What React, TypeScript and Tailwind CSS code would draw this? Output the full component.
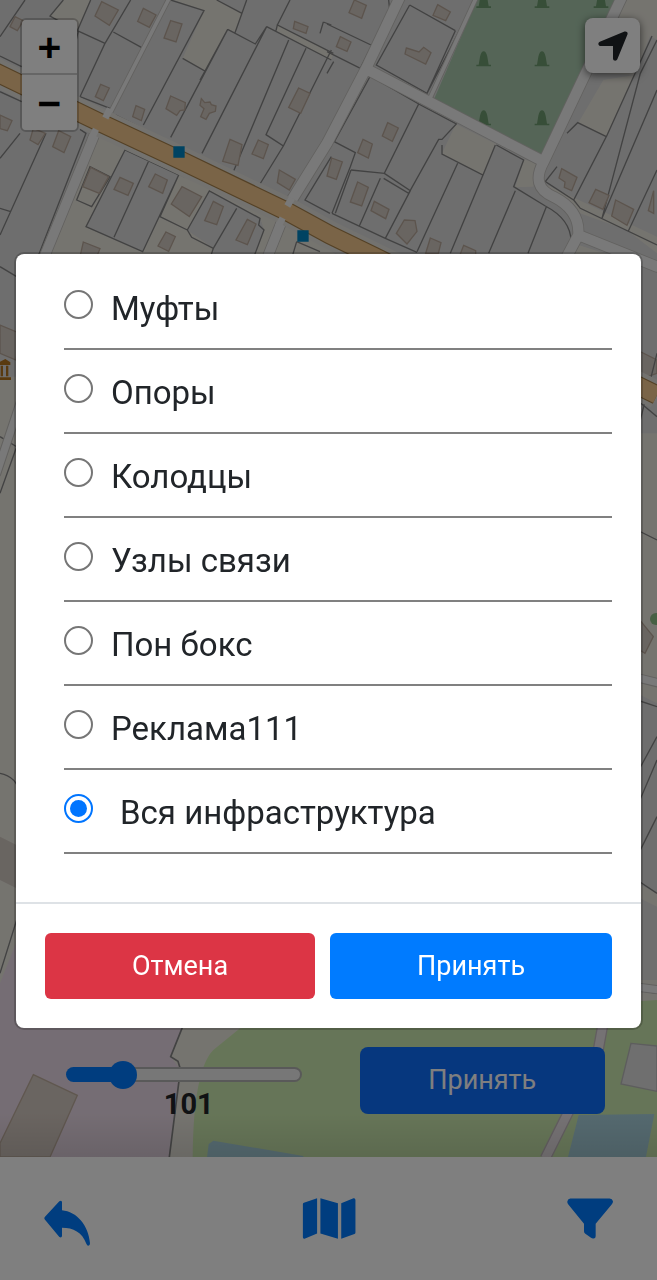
import { useState } from "react";
import type { CSSProperties } from "react";
import { FaLocationArrow } from "react-icons/fa6";

const LAYERS = [
  { id: "couplings", label: "Муфты" },
  { id: "poles", label: "Опоры" },
  { id: "wells", label: "Колодцы" },
  { id: "nodes", label: "Узлы связи" },
  { id: "pon", label: "Пон бокс" },
  { id: "ads", label: "Реклама111" },
  { id: "all", label: "Вся инфраструктура", indent: true },
];

const MAX_RADIUS = 500;

const TREES = [
  [470, 0], [645, 0], [822, 0],
  [470, 175], [645, 175],
  [470, 352], [645, 352],
];

const Tree = ({ x, y }: { x: number; y: number }) => (
  <path
    d={`M${x - 22} ${y + 24}h44v-5h-7l-4-24q-4-16-11-16t-11 16l-4 24h-7z`}
    fill="#6f9c70"
  />
);

/* --- Map tiles: four sheets, three units per pixel --- */
function MapCanvas() {
  return (
    <svg
      className="absolute inset-0 h-full w-full"
      viewBox="0 0 1971 3471"
      preserveAspectRatio="xMidYMid slice"
      aria-hidden="true"
    >
      <rect width="1971" height="3471" fill="#ebe8df" />
      <path d="M0 0H1971V1300H0z" fill="#dcdcdc" />
      <path d="M0 1130H200V3100H0z" fill="#ebe8df" />

      {/* open ground */}
      <g fill="#ebe8df">
        <path d="M190 0H272L232 92L150 48zM520 0H650L726 40L705 96L683 88L615 213L548 175L612 32z" />
        <path d="M830 75L1000 160L994 180L828 92z" />
        <path d="M285 385L375 450L258 680L428 755L480 650L560 690L640 740V775H130zM535 525L628 573L562 690L480 650z" />
        <path d="M640 740L628 573L780 655L792 690L760 775H1020L870 640L540 500z" />
        <path d="M1368 372L1488 432L1450 525L1325 462zM1572 478L1608 490L1600 560L1546 562zM1810 240L1905 225L1818 410L1735 368z" />
        <path d="M1870 0H1971V120L1950 108L1905 225L1820 220z" />
        <path d="M1620 545L1971 710V760L1880 690L1740 640zM1720 730L1860 775H1700z" />
      </g>
      <path d="M375 450L536 525L428 755L258 680zM628 573L780 655L792 690L760 775H630L640 745L562 690z" fill="#dcdcdc" />

      {/* plot borders, west */}
      <g fill="none" stroke="#858585" strokeWidth="4">
        <path d="M75 0L0 110M190 0L150 48L235 95M272 0L232 92L315 130L240 290M392 0L315 130M340 96L424 142M235 92L220 160" />
        <path d="M0 168L65 200M240 290L330 325M347 345L860 600M512 0L612 32L430 375M548 175L615 213L683 88L512 412M615 213L600 240M683 88L766 132L800 80L606 460M705 98L740 0M650 0L726 40" />
        <path d="M800 80L994 180M828 92L832 75L1000 160M866 120L700 515M918 145L798 404L850 438L780 552M994 150L850 438M870 0L832 75M970 66L994 75M970 66L960 100" />
        <path d="M0 275L65 305M240 388L258 400L112 775M60 400L0 475M138 400L0 705M0 625L32 635M230 600L275 620L330 530L270 500z" />
        <path d="M375 450L258 680L428 755L536 525zM445 485L342 712M536 525L480 650L562 690L628 573L780 655L776 675L792 690L760 775M562 690L575 712L640 745L710 625M640 745L630 775M890 725L875 775M890 725L960 755" />
        <path d="M994 470L915 600L990 640" />
      </g>

      {/* plot borders, east */}
      <g transform="translate(981 0)" fill="none" stroke="#858585" strokeWidth="4">
        <path d="M185 0L188 30L100 205L0 155M0 72L132 135M20 185L0 220M248 15L148 195L300 280L445 0M248 15L385 92M300 280L385 92" />
        <path d="M130 228L22 425L85 458L70 500L15 640M130 228L275 312L172 520L72 510M275 312L388 372L345 418L335 418L245 580L170 535M172 520L250 572L175 715M345 435L345 462L468 525L505 435M392 490L270 755M468 525L370 760M508 435L590 480L560 560L655 618M565 572L485 760M658 620L603 760M655 618Q735 660 732 730" />
        <path d="M15 640L175 715L270 757M160 535L97 678M72 510L25 640M720 400L752 368L838 410L740 600L655 545L690 500M975 108L838 410M990 120L940 220L825 655M990 270L825 655M990 510L903 695M740 600L760 625L990 735" />
      </g>

      {/* buildings */}
      <g fill="#d3cac3" stroke="#b9a99b" strokeWidth="4">
        <path d="M305 5L355 30L328 76L285 48zM430 25L468 45L448 82L413 64zM512 62L546 72L528 126L492 114zM45 50L70 62L52 92L30 80zM302 253L328 264L310 302L286 290zM408 317L434 328L424 362L398 350zM512 288L556 308L554 330L540 332L530 346L498 326zM604 296L614 308L630 306L634 314L648 318L646 334L628 340L618 358L602 350L612 326L600 316z" />
        <path d="M896 264L930 280L902 340L866 322zM884 64L924 80L918 100L880 86zM690 418L726 434L714 496L668 484zM775 420L805 434L790 476L756 462zM838 510L886 538L868 570L832 548zM0 345L36 362L22 392L0 386zM100 385L136 400L114 434L90 420zM176 392L212 410L192 458L158 440zM272 502L326 530L298 580L248 560z" />
        <path d="M360 532L400 550L384 586L342 568zM466 522L502 540L488 580L446 560zM546 560L605 590L568 650L514 612zM640 604L670 620L650 674L614 662zM742 658L768 672L742 734L708 720zM498 696L526 710L506 754L474 738zM250 726L300 746L290 770H240z" />
        <path transform="translate(981 0)" d="M82 0L118 16L104 55L66 38zM332 14L370 36L356 62L318 46zM40 110L72 126L60 154L28 140zM238 144L276 156L290 142L312 158L296 192L234 162zM182 368L214 384L196 424L166 408zM108 418L136 432L124 474L92 458zM14 474L46 486L28 538L0 528zM92 546L124 562L104 618L70 606zM142 604L186 628L176 656L132 632zM232 660L264 662L270 694L240 732L208 700zM310 714L342 728L334 760H296zM410 736L446 752V775H395z" />
        <path transform="translate(981 0)" d="M704 506L750 532L734 572L712 562L714 546L696 534zM806 568L846 586L828 628L786 608zM866 600L920 628L900 676L854 648zM980 572V640L964 632zM820 0H860L846 12z" />
        <path d="M0 975L60 1000L48 1080L0 1060zM1911 1050L1971 1080V1120L1911 1140zM1911 1850L1960 1910L1935 1960L1911 1945zM1911 2530L1960 2560L1935 2650L1911 2640z" />
      </g>

      {/* cemetery */}
      <g transform="translate(981 0)">
        <path d="M450 0H885L660 470L320 300z" fill="#aacbaf" />
        {TREES.map(([x, y]) => (
          <Tree key={`${x}-${y}`} x={x} y={y} />
        ))}
      </g>

      {/* edges left and right of the plan */}
      <path d="M1911 2080L1971 2110V2680L1911 2650z" fill="#dcdcdc" />
      <path d="M1911 2690L1971 2720V2940H1911z" fill="#dcdcdc" />
      <path d="M0 2510L60 2540V2670L0 2640z" fill="#d3cac3" />
      <g fill="none" stroke="#858585" strokeWidth="4">
        <path d="M0 800L50 830M0 1310L50 1340L0 1480M1911 1300L1971 1060M1911 1200L1971 1250M1911 1590L1971 1620M1911 2100L1971 2120M1911 2320L1971 2210M1911 2420L1971 2280M1911 2570L1971 2450M1911 2640L1971 2680M1911 2970L1971 2980" />
        <path d="M0 2320Q50 2330 60 2380M0 2920L50 2760" />
      </g>
      <circle cx="1968" cy="1857" r="18" fill="#8fc088" />
      <path d="M0 1085l16-8 15 10v8H0zM2 1097h7v32H2zM18 1097h7v32h-7zM0 1132h33v8H0z" fill="#b2741e" />

      {/* side streets: casing, then surface */}
      <g fill="none" stroke="#c4c2be" strokeLinecap="round" strokeLinejoin="round">
        <path d="M510 -10L325 350M1430 -10L1290 295" strokeWidth="16" />
        <path d="M60 1210L-10 1420M1900 2030L1980 2050M1900 2960L1980 2970" strokeWidth="28" />
        <path d="M285 400L125 790M845 665L795 790" strokeWidth="34" />
        <path d="M1205 -20L1101 200L981 430L868 612M1101 208L1631 485M1631 485L1871 -20M1631 485Q1590 560 1660 590Q1740 630 1735 705L1971 800M1735 705L1690 790" strokeWidth="36" />
      </g>
      <g fill="none" stroke="#f2f2f2" strokeLinecap="round" strokeLinejoin="round">
        <path d="M510 -10L325 350M1430 -10L1290 295" strokeWidth="11" />
        <path d="M60 1210L-10 1420M1900 2030L1980 2050M1900 2960L1980 2970" strokeWidth="22" />
        <path d="M285 400L125 790M845 665L795 790" strokeWidth="29" />
        <path d="M1205 -20L1101 200L981 430L868 612M1101 208L1631 485M1631 485L1871 -20M1631 485Q1590 560 1660 590Q1740 630 1735 705L1971 800M1735 705L1690 790" strokeWidth="31" />
      </g>

      {/* main street */}
      <g fill="none">
        <path d="M-20 213L300 368L540 480L860 634L990 705L1120 768L1971 1185" stroke="#e6e4de" strokeWidth="84" />
        <path d="M-20 213L300 368L540 480L860 634L990 705L1120 768L1971 1185" stroke="#a8824c" strokeWidth="58" />
        <path d="M-20 213L300 368L540 480L860 634L990 705L1120 768L1971 1185" stroke="#f5c98e" strokeWidth="51" />
        <path d="M316 354L330 326M272 420L288 388M862 618L876 594M834 680L848 654" stroke="#f2f2f2" strokeWidth="20" />
      </g>

      {/* infrastructure markers */}
      <path d="M520 439h34v34h-34zM892 691h34v34h-34z" fill="#0086c4" />

      {/* southern sheets */}
      <path d="M0 2950L60 2800L560 3040L545 3085L512 3170L542 3210L508 3471H0z" fill="#ebdbe8" />
      <path d="M100 3224L232 3286L150 3471H0V3430z" fill="#d5cac2" stroke="#bfae9f" strokeWidth="4" />
      <path d="M720 3085L1971 3000V3471H578Q580 3210 640 3150z" fill="#cdebb0" />
      <path d="M548 3080L512 3170L534 3184L542 3210L536 3250L508 3471" fill="none" stroke="#858585" strokeWidth="5" />
      <path d="M640 3422L910 3468V3480H620L626 3432z" fill="#aad3df" />
      <g transform="translate(981 3030)">
        <path d="M912 100L990 108V244L882 222z" fill="#dedede" stroke="#bbb" strokeWidth="4" />
        <path d="M755 315L982 312L956 445H722z" fill="#aad3df" />
        <path d="M830 30L812 130L655 445" fill="none" stroke="#c5bcc0" strokeWidth="34" />
        <path d="M830 30L812 130L655 445" fill="none" stroke="#ebe4e8" strokeWidth="26" />
      </g>
    </svg>
  );
}

const ReplyIcon = () => (
  <svg viewBox="0 0 138 138" className="h-[46px] w-[46px]" fill="currentColor" aria-hidden="true">
    <path d="M46 4Q52-1 54 6V31C98 35 134 76 138 130Q138 137 133 137Q129 137 127 131C114 96 88 83 54 83V108Q53 115 46 111L3 59Q-1 55 3 50z" />
  </svg>
);

const MapIcon = () => (
  <svg viewBox="0 0 160 124" className="h-[41px] w-[54px]" fill="currentColor" aria-hidden="true">
    <path d="M4 14L44 1V107L6 123Q1 124 1 119V19Q1 15 4 14zM54 1L107 16V123L54 107zM117 16L154 1Q160 0 160 6V104Q160 108 157 109L117 123z" />
  </svg>
);

const FunnelIcon = () => (
  <svg viewBox="0 0 138 122" className="h-[41px] w-[46px]" fill="currentColor" aria-hidden="true">
    <path d="M10 1H128Q136 1 138 9Q138 14 134 19L86 77V114Q86 122 78 121Q75 121 72 119L55 107Q51 104 51 99V77L4 19Q0 14 1 9Q3 1 10 1z" />
  </svg>
);

export default function App() {
  const [layer, setLayer] = useState("all");
  const [radius, setRadius] = useState(101);
  const [open, setOpen] = useState(true);

  const trackStyle: CSSProperties = {
    background: `linear-gradient(to right, #007bff ${(radius / MAX_RADIUS) * 100}%, transparent 0) border-box, linear-gradient(#efefef, #efefef) padding-box, linear-gradient(#b2b2b2, #b2b2b2) border-box`,
  };

  return (
    <div className="relative flex min-h-screen flex-col bg-white font-[Roboto,sans-serif] text-[#212529]">
      {/* --- Map --- */}
      <main className="relative flex flex-1 flex-col justify-between overflow-hidden">
        <MapCanvas />

        <div className="relative flex items-start justify-between px-[17px] pt-[18px]">
          <div className="ml-[3px] flex flex-col overflow-hidden rounded-md border-2 border-black/20 bg-clip-padding">
            <button
              type="button"
              aria-label="Приблизить"
              className="flex h-[55px] w-[55px] items-center justify-center border-b-2 border-[#ccc] bg-white font-['DejaVu_Sans_Mono',monospace] text-[38px] leading-none font-bold text-black"
            >
              +
            </button>
            <button
              type="button"
              aria-label="Отдалить"
              className="flex h-[55px] w-[55px] items-center justify-center bg-white font-['DejaVu_Sans_Mono',monospace] text-[38px] leading-none font-bold text-black"
            >
              −
            </button>
          </div>
          <button
            type="button"
            aria-label="Моё местоположение"
            className="flex h-[55px] w-[55px] items-center justify-center rounded-lg bg-white shadow-[0_2px_8px_rgba(0,0,0,0.6)]"
          >
            <FaLocationArrow size={36} />
          </button>
        </div>

        <div className="relative flex gap-12 bg-linear-to-b from-transparent from-60% to-black/10 pr-[52px] pb-[35px] pl-[66px]">
          <div className="flex flex-1 flex-col pt-5">
            <input
              id="radius"
              type="range"
              min={0}
              max={MAX_RADIUS}
              value={radius}
              onChange={(e) => setRadius(Number(e.target.value))}
              aria-label="Радиус"
              style={trackStyle}
              className="h-[15px] w-[96%] appearance-none rounded-full border-2 border-transparent [&::-webkit-slider-thumb]:h-[28px] [&::-webkit-slider-thumb]:w-[28px] [&::-webkit-slider-thumb]:appearance-none [&::-webkit-slider-thumb]:rounded-full [&::-webkit-slider-thumb]:bg-[#007bff]"
            />
            <output htmlFor="radius" className="mt-1 text-center text-[29px] leading-9 font-bold">
              {radius}
            </output>
          </div>
          <button
            type="button"
            onClick={() => setOpen(true)}
            className="h-[67px] flex-1 rounded-lg bg-[#0d6efd] text-[27px] text-white"
          >
            Принять
          </button>
        </div>
      </main>

      {/* --- Bottom navigation --- */}
      <nav className="flex h-[123px] items-center justify-between bg-white px-[44px] text-[#007bff] shadow-[0_0_40px_rgba(0,0,0,0.1)]">
        <button type="button" aria-label="Назад" className="pt-2">
          <ReplyIcon />
        </button>
        <button type="button" aria-label="Карта">
          <MapIcon />
        </button>
        <button type="button" aria-label="Фильтр" onClick={() => setOpen(true)}>
          <FunnelIcon />
        </button>
      </nav>

      {/* --- Layer picker --- */}
      {open && (
        <div className="fixed inset-0 z-10 flex items-center bg-black/50 px-4 pt-[2px]">
          <form
            role="dialog"
            aria-modal="true"
            aria-label="Фильтр"
            onSubmit={(e) => {
              e.preventDefault();
              setOpen(false);
            }}
            className="w-full rounded-lg bg-white shadow-[0_0_0_2px_rgba(0,0,0,0.2)]"
          >
            <div className="pt-3 pr-[29px] pb-12 pl-12">
              {LAYERS.map((item) => (
                <label
                  key={item.id}
                  className="flex h-[84px] items-start gap-[18px] border-b-2 border-[#808080] pt-6 text-[33px] leading-[38px]"
                >
                  <input
                    type="radio"
                    name="layer"
                    checked={layer === item.id}
                    onChange={() => setLayer(item.id)}
                    className="h-[29px] w-[29px] shrink-0 appearance-none rounded-full border-2 border-[#767676] bg-clip-content p-1 checked:border-[#0075ff] checked:bg-[#0075ff]"
                  />
                  <span className={item.indent ? "pl-[9px]" : ""}>{item.label}</span>
                </label>
              ))}
            </div>
            <div className="flex gap-[15px] border-t-2 border-[#dee2e6] px-[29px] py-[29px] text-[27px] text-white">
              <button
                type="button"
                onClick={() => setOpen(false)}
                className="h-[66px] flex-auto rounded-md bg-[#dc3545]"
              >
                Отмена
              </button>
              <button type="submit" className="h-[66px] flex-auto rounded-md bg-[#007bff]">
                Принять
              </button>
            </div>
          </form>
        </div>
      )}
    </div>
  );
}
